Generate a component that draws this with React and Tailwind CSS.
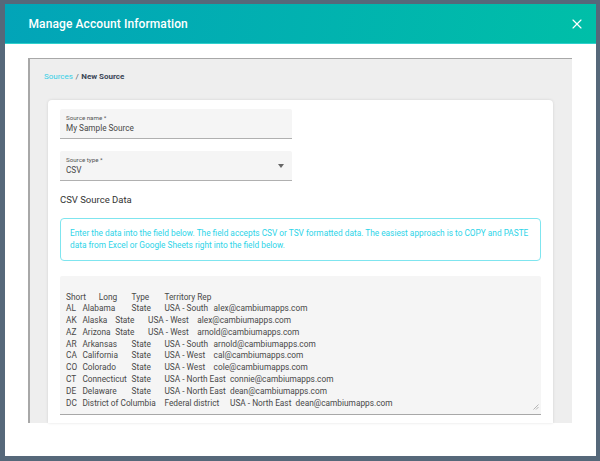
import { X } from "lucide-react";

const csvData = [
  "Short\tLong\tType\tTerritory Rep",
  "AL\tAlabama\tState\tUSA - South\talex@cambiumapps.com",
  "AK\tAlaska\tState\tUSA - West\talex@cambiumapps.com",
  "AZ\tArizona\tState\tUSA - West\tarnold@cambiumapps.com",
  "AR\tArkansas\tState\tUSA - South\tarnold@cambiumapps.com",
  "CA\tCalifornia\tState\tUSA - West\tcal@cambiumapps.com",
  "CO\tColorado\tState\tUSA - West\tcole@cambiumapps.com",
  "CT\tConnecticut\tState\tUSA - North East\tconnie@cambiumapps.com",
  "DE\tDelaware\tState\tUSA - North East\tdean@cambiumapps.com",
  "DC\tDistrict of Columbia\tFederal district\tUSA - North East\tdean@cambiumapps.com",
].join("\n");

const App = () => {
  return (
    <div className="h-[461px] w-[600px] overflow-hidden bg-[#56687a] pt-[4px] pb-[5px] pl-[5px] pr-[4px] font-['Roboto',sans-serif]">
      <div className="flex h-full flex-col bg-white">
        {/* Header */}
        <div className="flex h-[40px] shrink-0 items-center justify-between border-b border-[#2fd0cc] bg-[linear-gradient(100deg,#02a4b8,#00bfa8)] pl-[23.5px] pr-[11px]">
          <h1 className="text-[12px] font-medium tracking-[0.1px] text-white">Manage Account Information</h1>
          <X className="h-[16px] w-[16px] text-white" strokeWidth={1.75} />
        </div>

        {/* Panel */}
        <div className="flex min-h-0 flex-1 flex-col pt-[14px] pl-[23px] pr-[24px] pb-[33px]">
          <div className="flex min-h-0 flex-1 flex-col border-t border-l-2 border-[#a8a8a8] bg-[#eeeeee] pl-[18px] pr-[19px]">
            <div className="-ml-[4px] flex h-[41px] shrink-0 items-center pb-[5px] text-[8px]">
              <span className="text-[#35cfe6]">Sources</span>
              <span className="mx-[2.5px] text-[#555e6b]">/</span>
              <span className="font-bold text-[#3a4656]">New Source</span>
            </div>

            {/* Card */}
            <div className="flex min-h-0 flex-1 flex-col gap-[12px] overflow-hidden rounded-t-[4px] bg-white px-[12px] pt-[9px] shadow-[0_0_3px_rgba(0,0,0,0.12)]">
              <div className="flex h-[30px] w-[232px] shrink-0 flex-col justify-center rounded-t-[2px] border-b border-[#b0b0b0] bg-[#f5f5f5] px-[6px]">
                <label className="text-[6.2px] leading-[8px] text-[#555]">Source name *</label>
                <span className="text-[8.2px] leading-[12px] text-[#484848]">My Sample Source</span>
              </div>

              <div className="flex h-[30px] w-[232px] shrink-0 items-center justify-between rounded-t-[2px] border-b border-[#b0b0b0] bg-[#f5f5f5] pl-[6px] pr-[8px]">
                <div className="flex flex-col">
                  <label className="text-[6.2px] leading-[8px] text-[#555]">Source type *</label>
                  <span className="text-[8.2px] leading-[12px] text-[#484848]">CSV</span>
                </div>
                <div className="h-0 w-0 border-x-[3.5px] border-t-[4px] border-x-transparent border-t-[#666]" />
              </div>

              <h2 className="-mb-[1px] text-[9.5px] leading-[14px] text-[#333]">CSV Source Data</h2>

              <div className="shrink-0 rounded-[4px] border border-[#7fe5ef] px-[9px] pt-[8px] pb-[9px] text-[8.3px] leading-[12px] text-[#2dd4e8]">
                Enter the data into the field below. The field accepts CSV or TSV formatted data. The easiest approach is to COPY and PASTE data from Excel or Google Sheets right into the field below.
              </div>

              <div className="relative mt-[3px] h-[139px] w-full shrink-0">
                <textarea
                  readOnly
                  defaultValue={csvData}
                  className="h-full w-full resize-none whitespace-pre rounded-t-[2px] border-b border-[#a8a8a8] bg-[#f5f5f5] px-[6px] pt-[15.5px] text-[8.3px] leading-[11.8px] text-[#484848] outline-none [tab-size:16.4px]"
                />
                {/* resize grip */}
                <svg className="absolute bottom-[5px] right-[2px] h-[6px] w-[6px]" viewBox="0 0 6 6" fill="none" stroke="#999" strokeWidth="0.7">
                  <path d="M0.5 5.5 L5.5 0.5 M3 5.5 L5.5 3" />
                </svg>
              </div>
            </div>
          </div>
        </div>
      </div>
    </div>
  );
};

export default App;
